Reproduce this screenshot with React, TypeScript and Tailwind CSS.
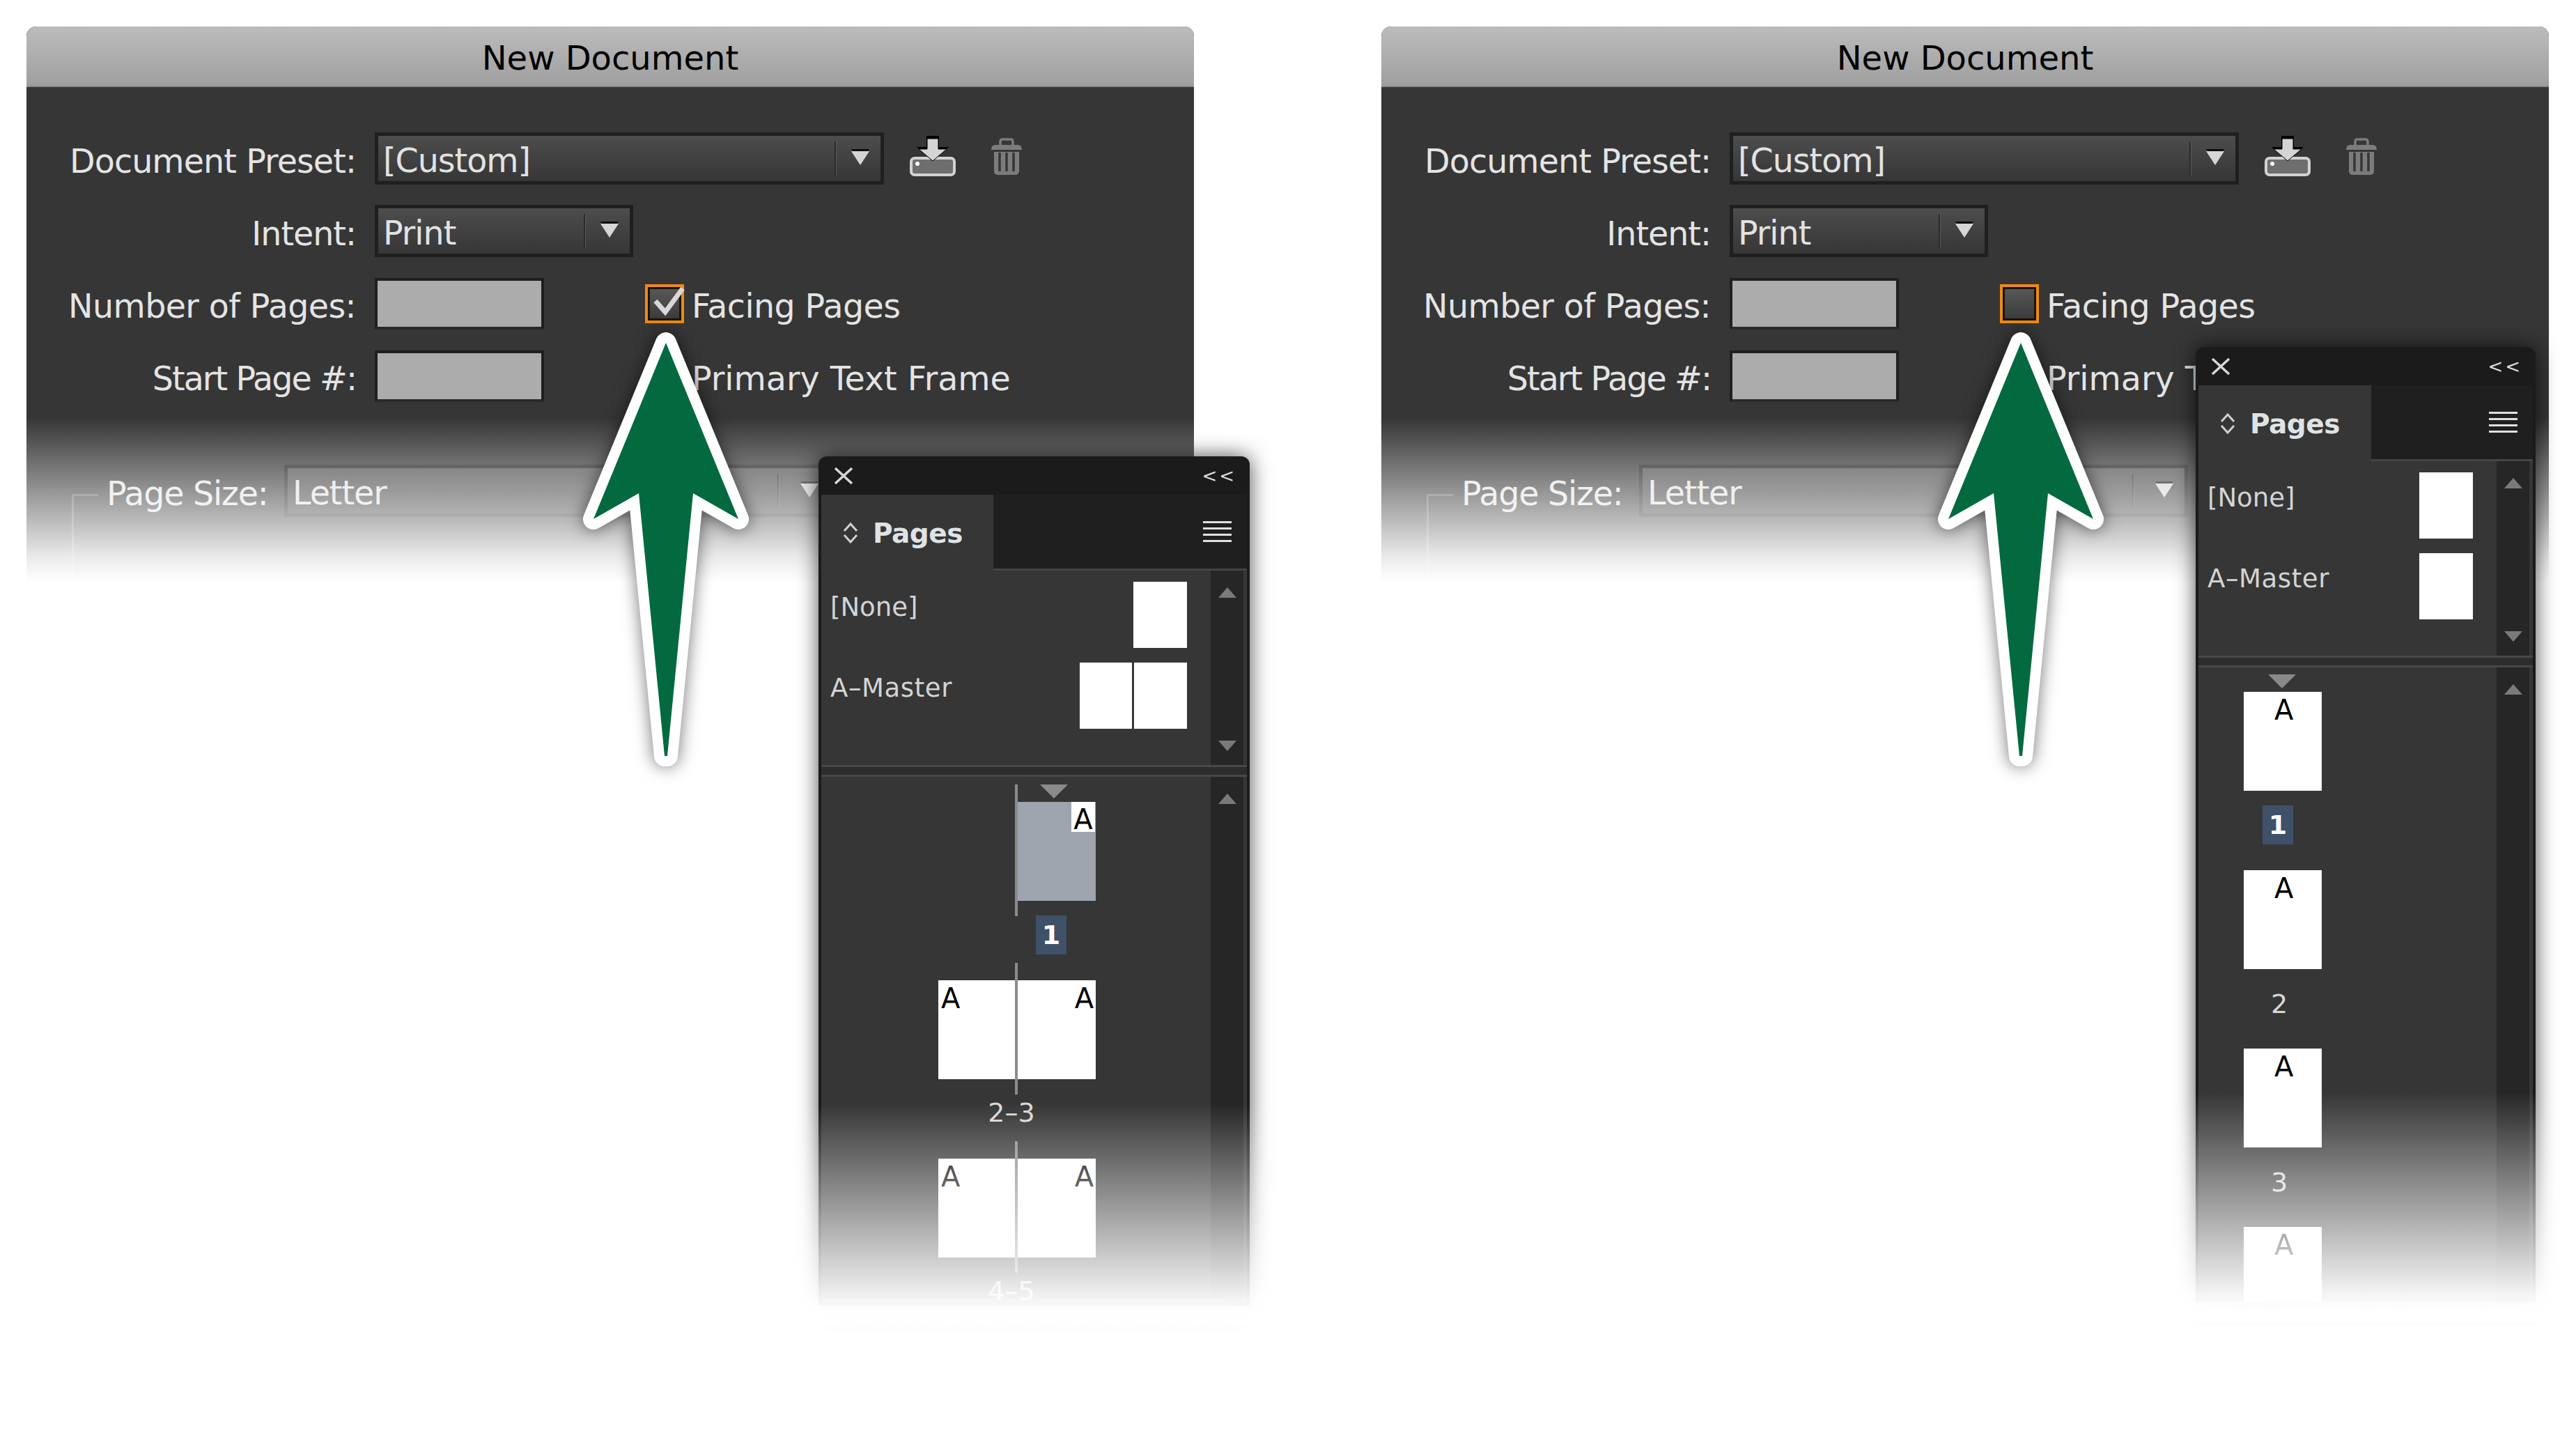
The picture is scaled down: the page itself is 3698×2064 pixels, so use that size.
import React from "react";

const font = { fontFamily: '"DejaVu Sans", sans-serif' };

function Caret() {
	return (
		<svg width="26" height="22" viewBox="0 0 26 22" className="drop-shadow-[0_-3px_0_rgba(0,0,0,0.8)]">
			<path d="M0 2 H26 L13 22 Z" fill="#d6d6d6" />
		</svg>
	);
}

function Select({ value, width, dividerRight = 63 }: { value: string; width: string; dividerRight?: number }) {
	return (
		<div className={`${width} relative flex h-[75px] shrink-0 items-center border-[5px] border-[#1f1f1f] bg-gradient-to-b from-[#4d4d4d] to-[#363636] pl-[7px] text-[47.5px] tracking-[-1px] text-[#e2e2e2]`}>
			<span className="mt-[6px]">{value}</span>
			<div className="absolute top-[8px] bottom-[8px] w-[3px] bg-[#2a2a2a] border-r border-[#5c5c5c]" style={{ right: dividerRight }} />
			<div className="absolute right-[16px] top-[20px]">
				<Caret />
			</div>
		</div>
	);
}

function Label({ children, tracking }: { children: React.ReactNode; tracking: string }) {
	return <div className={`${tracking} w-[473px] shrink-0 pt-[8px] text-right text-[47.5px] leading-none text-[#e4e4e4]`}>{children}</div>;
}

function NumberInput() {
	return <div className="h-[74px] w-[243px] shrink-0 border-[4px] border-[#1f1f1f] border-b-[#2a2a2a] bg-[#acacac]" />;
}

function SaveIcon() {
	return (
		<svg width="66" height="58" viewBox="0 0 66 58" className="shrink-0">
			<path d="M24 0 H42 V16 H56 L33 37 L10 16 H24 Z" fill="#000" />
			<rect x="2" y="32" width="62" height="24" rx="5" fill="#6e6e6e" stroke="#d2d2d2" strokeWidth="4" />
			<path d="M25 4 H41 V19 H53 L33 36 L13 19 H25 Z" fill="#d4d4d4" stroke="#000" strokeWidth="1" />
			<circle cx="11" cy="40" r="3" fill="#fff" />
		</svg>
	);
}

function TrashIcon() {
	return (
		<svg width="46" height="54" viewBox="0 0 46 54" className="shrink-0">
			<path d="M14 10 V5 Q14 2 17 2 H29 Q32 2 32 5 V10" fill="none" stroke="#7c7c7c" strokeWidth="3.5" />
			<path d="M1 17 Q1 11 6 10 H40 Q45 11 45 17 Z" fill="#7c7c7c" />
			<path d="M5 20 H41 V47 Q41 53 35 53 H11 Q5 53 5 47 Z" fill="#7c7c7c" />
			<path d="M13 21 V48 M23 21 V48 M33 21 V48" stroke="#363636" strokeWidth="3.5" />
		</svg>
	);
}

function Checkbox({ checked }: { checked: boolean }) {
	return (
		<div className="relative h-[56px] w-[56px] shrink-0 border-[4px] border-[#f08a12] bg-[#151515] p-[3px]">
			<div className="h-full w-full bg-gradient-to-b from-[#575757] to-[#3c3c3c]" />
			{checked && (
				<svg width="48" height="44" viewBox="0 0 48 44" className="absolute left-[5px] top-[0px]">
					<path d="M6 20 L20 36 L45 2" fill="none" stroke="#d8d8d8" strokeWidth="7" />
				</svg>
			)}
		</div>
	);
}

function Arrow() {
	return (
		<svg
			width="320"
			height="660"
			viewBox="800 460 320 660"
			className="absolute left-[762px] top-[422px] drop-shadow-[0_0_12px_rgba(0,0,0,0.55)]"
		>
			<path
				d="M956 492 L1060 745 L995 708 L958 1085 L954 1085 L917 708 L852 745 Z"
				fill="#036a3f"
				stroke="#fff"
				strokeWidth="30"
				strokeLinejoin="round"
				style={{ paintOrder: "stroke" }}
			/>
		</svg>
	);
}

function ScrollBar({ up = true, down = false, className = "" }: { up?: boolean; down?: boolean; className?: string }) {
	return (
		<div className={`flex w-[47px] shrink-0 flex-col items-center justify-between bg-[#262626] pb-[20px] pt-[24px] ${className}`}>
			{up && <div className="h-0 w-0 border-x-[13px] border-b-[15px] border-x-transparent border-b-[#7a7a7a]" />}
			{down && <div className="h-0 w-0 border-x-[13px] border-t-[15px] border-x-transparent border-t-[#7a7a7a]" />}
		</div>
	);
}

function Thumb({ letter, gray, align = "center" }: { letter?: boolean; gray?: boolean; align?: "left" | "right" | "center" }) {
	const place = align === "left" ? "left-[4px]" : align === "right" ? "right-[3px]" : "left-[44px]";
	return (
		<div className={`relative h-[142px] w-[112px] shrink-0 ${gray ? "bg-[#9fa5ae]" : "bg-white"}`}>
			{letter && !gray && <span className={`absolute top-[6px] ${place} text-[40px] leading-[40px] text-black`}>A</span>}
			{letter && gray && (
				<div className="absolute right-[1px] top-0 flex h-[43px] w-[34px] justify-center bg-white">
					<span className="mt-[4px] text-[40px] leading-[43px] text-black">A</span>
				</div>
			)}
		</div>
	);
}

function Spread({ label, firstGray }: { label: string; firstGray?: boolean }) {
	return (
		<div className="relative flex w-[226px] gap-[2px] pb-[114px]">
			{firstGray ? <div className="h-[142px] w-[112px]" /> : <Thumb letter align="left" />}
			<Thumb letter gray={firstGray} align="right" />
			<div className="absolute left-[110px] top-[-25px] h-[189px] w-[4px] bg-[#8c8c8c]" />
			{firstGray ? (
				<div className="absolute left-[140px] top-[163px] flex h-[56px] w-[44px] items-center justify-center bg-[#3f5168] text-[38px] font-bold text-white">{label}</div>
			) : (
				<div className="absolute left-[55px] top-[171px] w-[100px] text-center text-[38px] leading-[38px] text-[#d8d8d8]">{label}</div>
			)}
		</div>
	);
}

function Panel({ facing }: { facing: boolean }) {
	return (
		<div className={`absolute flex flex-col rounded-t-[12px] bg-[#1b1b1b] px-[4px] shadow-[0_0_30px_rgba(0,0,0,0.7)] ${facing ? "left-[1137px] top-[617px] h-[1219px] w-[619px]" : "left-[1169px] top-[460px] h-[1370px] w-[488px]"}`}>
			<div className="flex h-[55px] shrink-0 items-center justify-between pl-[18px] pr-[15px] text-[#dcdcdc]">
				<svg width="28" height="26" viewBox="0 0 28 26">
					<path d="M2 2 L26 24 M26 2 L2 24" stroke="#d8d8d8" strokeWidth="3.5" />
				</svg>
				<span className="text-[26px] leading-none tracking-[3px]">&lt;&lt;</span>
			</div>
			<div className="flex h-[109px] shrink-0 border-b-[3px] border-[#444]">
				<div className={`-mb-[3px] flex items-center gap-[20px] bg-[#363636] pl-[30px] ${facing ? "w-[247px]" : "w-[248px]"}`}>
					<svg width="24" height="36" viewBox="0 0 24 36">
						<path d="M3 15 L12 5 L21 15 M3 21 L12 31 L21 21" fill="none" stroke="#d0d0d0" strokeWidth="3" />
					</svg>
					<span className="mt-[4px] text-[39px] font-bold tracking-[-0.5px] text-[#dfe3e6]">Pages</span>
				</div>
				<div className="flex flex-1 items-center justify-end bg-[#1f1f1f] pr-[22px]">
					<div className="flex h-[30px] w-[41px] flex-col justify-between">
						<div className="h-[3px] bg-[#e0e0e0]" />
						<div className="h-[3px] bg-[#e0e0e0]" />
						<div className="h-[3px] bg-[#e0e0e0]" />
						<div className="h-[3px] bg-[#e0e0e0]" />
					</div>
				</div>
			</div>
			<div className="flex h-[279px] shrink-0 bg-[#363636]">
				<div className="flex-1 pl-[13px] pr-[34px] pt-[16px]">
					<div className="flex h-[95px] items-start justify-between text-[37px] leading-[74px] text-[#d4d4d4]">
						<span>[None]</span>
						<div className="h-[95px] w-[77px] bg-white" />
					</div>
					<div className="mt-[21px] flex h-[95px] items-start justify-between text-[37px] leading-[74px] text-[#d4d4d4]">
						<span className="tracking-[0.6px]">A–Master</span>
						{facing ? (
							<div className="flex gap-[3px]">
								<div className="h-[95px] w-[75px] bg-white" />
								<div className="h-[95px] w-[76px] bg-white" />
							</div>
						) : (
							<div className="h-[95px] w-[77px] bg-white" />
						)}
					</div>
				</div>
				<ScrollBar down />
				<div className="w-[5px]" />
			</div>
			<div className="h-[17px] shrink-0 border-y-[3px] border-[#484848] bg-[#2c2c2c]" />
			<div className="flex min-h-0 flex-1 overflow-hidden bg-[#363636]">
				{facing ? (
					<div className="relative flex-1 pl-[168px] pt-[36px]">
						<div className="absolute left-[314px] top-[11px] h-0 w-0 border-x-[20px] border-t-[20px] border-x-transparent border-t-[#8a8a8a]" />
						<Spread label="1" firstGray />
						<Spread label="2–3" />
						<Spread label="4–5" />
					</div>
				) : (
					<div className="relative flex-1 pl-[65px] pt-[35px]">
						<div className="absolute left-[100px] top-[10px] h-0 w-0 border-x-[20px] border-t-[20px] border-x-transparent border-t-[#8a8a8a]" />
						<div className="flex w-[113px] flex-col items-center">
							{["1", "2", "3", "4"].map((n, i) => (
								<div key={n} className="relative h-[256px] w-[113px]">
									<Thumb letter />
									{i === 0 && (
										<div className="absolute left-[27px] top-[163px] flex h-[56px] w-[44px] items-center justify-center bg-[#3f5168] text-[38px] font-bold text-white">{n}</div>
									)}
									{(i === 1 || i === 2) && (
										<div className="absolute left-[29px] top-[172px] w-[44px] text-center text-[38px] leading-[40px] text-[#d8d8d8]">{n}</div>
									)}
								</div>
							))}
						</div>
					</div>
				)}
				<ScrollBar />
				<div className="w-[5px]" />
			</div>
			{/* fade to the page */}
			<div className={`absolute -inset-x-[40px] bottom-[-30px] bg-gradient-to-b from-white/0 via-white/95 via-[88%] to-white ${facing ? "h-[320px]" : "h-[330px]"}`} />
		</div>
	);
}

function Scene({ facing }: { facing: boolean }) {
	return (
		<div className="relative h-[1900px] w-[1676px] shrink-0">
			<div className="relative h-[797px] overflow-hidden rounded-t-[14px] bg-[#363636]">
				<div className="flex h-[87px] items-center justify-center border-b-[2px] border-[#8c8c8c] bg-gradient-to-b from-[#bcbcbc] to-[#9f9f9f] pt-[4px] text-[48px] text-black">
					New Document
				</div>
				<div className="flex items-center pt-[65px]">
					<Label tracking="tracking-[-0.9px]">Document Preset:</Label>
					<div className="ml-[27px] flex items-center">
						<Select value="[Custom]" width="w-[731px]" />
						<div className="ml-[37px] -mt-[8px]">
							<SaveIcon />
						</div>
						<div className="ml-[50px] -mt-[6px]">
							<TrashIcon />
						</div>
					</div>
				</div>
				<div className="mt-[29px] flex items-center">
					<Label tracking="tracking-[-1px]">Intent:</Label>
					<div className="ml-[27px]">
						<Select value="Print" width="w-[371px]" />
					</div>
				</div>
				<div className="mt-[30px] flex items-center">
					<Label tracking="tracking-[-0.6px]">Number of Pages:</Label>
					<div className="ml-[27px]">
						<NumberInput />
					</div>
					<div className="ml-[145px]">
						<Checkbox checked={facing} />
					</div>
					<span className="ml-[11px] pt-[8px] text-[47.5px] leading-none tracking-[-0.6px] text-[#e4e4e4]">Facing Pages</span>
				</div>
				<div className="mt-[30px] flex items-center">
					<Label tracking="tracking-[-1.9px]">Start Page #:</Label>
					<div className="ml-[27px]">
						<NumberInput />
					</div>
					<span className="ml-[212px] pt-[8px] text-[47.5px] leading-none text-[#e4e4e4]">Primary Text Frame</span>
				</div>
				<div className="mt-[90px] flex items-center gap-[23px] pl-[115px]">
					<span className="w-[232px] pt-[8px] text-[47.5px] leading-none tracking-[-1.2px] text-[#e4e4e4]">Page Size:</span>
					<Select value="Letter" width="w-[788px]" dividerRight={72} />
				</div>
				<div className="absolute left-[65px] top-[671px] h-[160px] w-[38px] border-l-[3px] border-t-[3px] border-[#5f5f5f]" />
				<div className="absolute inset-x-0 bottom-0 h-[235px] bg-gradient-to-b from-white/0 via-white/90 via-[85%] to-white" />
			</div>
			<Panel facing={facing} />
			<Arrow />
		</div>
	);
}

export default function App() {
	return (
		<div className="flex h-[2064px] w-[3698px] gap-[269px] overflow-hidden bg-white pl-[38px] pt-[38px]" style={font}>
			<Scene facing />
			<Scene facing={false} />
		</div>
	);
}
